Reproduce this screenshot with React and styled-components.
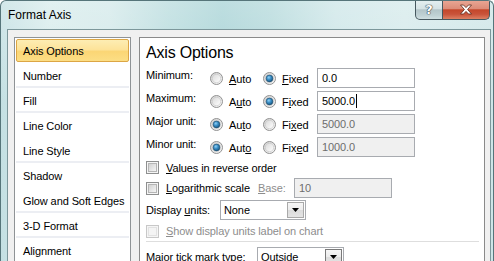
import React from 'react';
import styled, { createGlobalStyle, css } from 'styled-components';

const Global = createGlobalStyle`
  html, body { margin: 0; padding: 0; background: #fff; overflow: hidden; }
  body { font-family: "Liberation Sans", Arial, sans-serif; color: #000; }
  #root { width: 494px; height: 261px; overflow: hidden; }
`;

const Window = styled.div`
  width: 494px;
  height: 261px;
  box-sizing: border-box;
  display: flex;
  flex-direction: column;
  border: 1px solid #56757a;
  border-bottom: none;
  border-radius: 6px 6px 0 0;
  overflow: hidden;
  background:
    linear-gradient(180deg, rgba(255,255,255,0.25) 0%, rgba(255,255,255,0) 40%),
    linear-gradient(90deg, #c4e0e3 0%, #d8ecec 10%, #d3e9ea 22%, #b9dcde 34%, #a8d3d6 45%, #b4d9db 55%, #cde6e8 68%, #d5eaeb 82%, #cde5e7 100%);
`;

const TitleBar = styled.div`
  height: 28px;
  display: flex;
  align-items: stretch;
  flex-shrink: 0;
`;

const Title = styled.div`
  display: flex;
  align-items: center;
  padding-left: 7px;
  font-size: 12px;
  color: #000;
`;

const CaptionGroup = styled.div`
  margin-left: auto;
  margin-right: 3px;
  margin-top: -1px;
  display: flex;
  align-self: flex-start;
`;

const CaptionButton = styled.div`
  height: 20px;
  box-sizing: border-box;
  border: 1px solid #46585f;
  border-top: none;
  display: flex;
  align-items: center;
  justify-content: center;
  ${(p) =>
    p.$close
      ? css`
          width: 47px;
          border-left: none;
          border-radius: 0 0 5px 0;
          background: linear-gradient(180deg, #eaa896 0%, #dc8d79 45%, #c4472b 52%, #c9533a 75%, #dd8063 100%);
        `
      : css`
          width: 28px;
          border-radius: 0 0 0 5px;
          background: linear-gradient(180deg, #e5f0f1 0%, #d5e3e5 45%, #b3c5c9 52%, #bfd1d4 80%, #cfdfe1 100%);
        `}
`;

const HelpGlyph = styled.span`
  font-family: "DejaVu Sans", sans-serif;
  font-weight: bold;
  font-size: 13px;
  color: #fff;
  text-shadow: 0 0 1px #2c3a40, 0 0 1px #2c3a40, 0 0 1px #2c3a40;
  line-height: 1;
  margin-top: -1px;
`;

const Client = styled.div`
  flex: 1;
  margin: 0 2px 0 6px;
  border: 1px solid #7c979b;
  border-bottom: none;
  background: #f0f0f0;
  display: flex;
  align-items: flex-start;
  gap: 8px;
  padding: 7px 0 0 6px;
  overflow: hidden;
`;

const Sidebar = styled.div`
  width: 117px;
  height: 240px;
  box-sizing: border-box;
  flex-shrink: 0;
  background: #fff;
  border: 1px solid #8f9396;
  padding: 0 1px;
  display: flex;
  flex-direction: column;
`;

const NavItem = styled.div`
  height: 25px;
  box-sizing: border-box;
  display: flex;
  align-items: center;
  padding-left: 7px;
  font-size: 11px;
  letter-spacing: -0.1px;
  flex-shrink: 0;
  ${(p) => p.$sep && css`border-bottom: 2px solid #eceef3; padding-top: 2px;`}
  ${(p) =>
    p.$selected &&
    css`
      height: 23px;
      margin: 1px 0;
      padding-left: 6px;
      border: 1px solid #dca645;
      border-radius: 2px;
      background: linear-gradient(180deg, #fdedb3 0%, #fde39a 45%, #fbd675 55%, #fcde85 100%);
    `}
`;

const Panel = styled.div`
  width: 346px;
  height: 240px;
  box-sizing: border-box;
  flex-shrink: 0;
  background: #fff;
  border: 1px solid #8a8a8a;
  padding: 4px 0 0 6px;
  display: flex;
  flex-direction: column;
`;

const Heading = styled.div`
  height: 22px;
  line-height: 22px;
  font-size: 16px;
  letter-spacing: -0.2px;
  margin-bottom: 2px;
`;

const Row = styled.div`
  height: ${(p) => p.$h || 23}px;
  display: flex;
  align-items: center;
  font-size: 11px;
  letter-spacing: -0.1px;
  flex-shrink: 0;
`;

const RowLabel = styled.div`
  width: ${(p) => p.$w || 64}px;
  flex-shrink: 0;
  align-self: ${(p) => (p.$top ? 'flex-start' : 'center')};
  padding-top: ${(p) => (p.$top ? '1px' : '0')};
  line-height: 16px;
  color: ${(p) => (p.$disabled ? '#8d8d8d' : '#000')};
`;

const Option = styled.label`
  width: ${(p) => p.$w}px;
  flex-shrink: 0;
  display: flex;
  align-items: center;
  gap: ${(p) => p.$gap || 6}px;
  color: ${(p) => (p.$disabled ? '#8d8d8d' : '#000')};
  margin-top: ${(p) => p.$mt || 0}px;
`;

const Key = styled.span`
  text-decoration: underline;
  text-underline-offset: 1px;
`;

const TextBox = styled.div`
  width: 98px;
  height: 20px;
  box-sizing: border-box;
  border: 1px solid #a8abb0;
  padding-left: 4px;
  display: flex;
  align-items: center;
  font-size: 11px;
  background: ${(p) => (p.$disabled ? '#f0f0f0' : '#fff')};
  color: ${(p) => (p.$disabled ? '#6d6d6d' : '#000')};
  flex-shrink: 0;
`;

const Caret = styled.span`
  display: inline-block;
  width: 1px;
  height: 14px;
  background: #000;
  margin-left: 1px;
`;

const Select = styled.div`
  width: ${(p) => p.$w}px;
  height: 20px;
  box-sizing: border-box;
  border: 1px solid #a8abb0;
  background: #fff;
  display: flex;
  align-items: stretch;
  flex-shrink: 0;
`;

const SelectText = styled.div`
  flex: 1;
  display: flex;
  align-items: center;
  padding-left: 3px;
  font-size: 11px;
`;

const DropButton = styled.div`
  width: 17px;
  margin: 1px 1px 1px 0;
  box-sizing: border-box;
  border: 1px solid ${(p) => (p.$dark ? '#7a7a7a' : '#a9a9a9')};
  background: linear-gradient(180deg, #f6f6f6 0%, #ececec 50%, #dcdcdc 51%, #e4e4e4 100%);
  display: flex;
  align-items: center;
  justify-content: center;
`;

const Separator = styled.div`
  height: 1px;
  background: #dedede;
  margin-right: 5px;
  flex-shrink: 0;
`;

const Radio = ({ checked }) => (
  <svg width="13" height="13" viewBox="0 0 13 13" style={{ flexShrink: 0 }}>
    <defs>
      <linearGradient id="rOuter" x1="0" y1="0" x2="1" y2="1">
        <stop offset="0" stopColor="#d0d0d0" />
        <stop offset="1" stopColor="#fafafa" />
      </linearGradient>
      <linearGradient id="rInner" x1="0" y1="0" x2="1" y2="1">
        <stop offset="0" stopColor="#d9d9d9" />
        <stop offset="1" stopColor="#ffffff" />
      </linearGradient>
      <radialGradient id="rDot" cx="0.4" cy="0.35" r="0.7">
        <stop offset="0" stopColor="#8fd0f5" />
        <stop offset="0.45" stopColor="#3a8ec6" />
        <stop offset="1" stopColor="#134f78" />
      </radialGradient>
    </defs>
    <circle cx="6.5" cy="6.5" r="6" fill="url(#rOuter)" stroke="#929292" strokeWidth="1" />
    <circle cx="6.5" cy="6.5" r="4.2" fill="url(#rInner)" stroke="#c4c4c4" strokeWidth="0.6" />
    {checked && <circle cx="6.5" cy="6.5" r="3.4" fill="url(#rDot)" stroke="#1c4a6a" strokeWidth="0.6" />}
  </svg>
);

const Check = ({ disabled }) => (
  <svg width="13" height="13" viewBox="0 0 13 13" style={{ flexShrink: 0 }}>
    <defs>
      <linearGradient id="cInner" x1="0" y1="0" x2="1" y2="1">
        <stop offset="0" stopColor="#cfcfcf" />
        <stop offset="1" stopColor="#f7f7f7" />
      </linearGradient>
    </defs>
    <rect x="0.5" y="0.5" width="12" height="12" fill="#f5f5f5" stroke={disabled ? '#c8c8c8' : '#8e8f8f'} />
    {disabled ? (
      <rect x="2.5" y="2.5" width="8" height="8" fill="#f4f4f4" stroke="#e2e2e2" />
    ) : (
      <rect x="2.5" y="2.5" width="8" height="8" fill="url(#cInner)" stroke="#b5b5b5" />
    )}
  </svg>
);

const Triangle = () => (
  <svg width="7" height="4" viewBox="0 0 7 4">
    <path d="M0 0 H7 L3.5 4 Z" fill="#000" />
  </svg>
);

const CloseX = () => (
  <svg width="14" height="11" viewBox="0 0 14 11">
    <path
      d="M1.5 1 H4.5 L7 3.6 L9.5 1 H12.5 L8.6 5.5 L12.5 10 H9.5 L7 7.4 L4.5 10 H1.5 L5.4 5.5 Z"
      fill="#fff"
      stroke="#5a2618"
      strokeWidth="0.8"
      strokeLinejoin="round"
    />
  </svg>
);

const withKey = (text, idx) => [
  text.slice(0, idx),
  <Key key="k">{text[idx]}</Key>,
  text.slice(idx + 1),
];

const navItems = [
  { label: 'Axis Options', selected: true },
  { label: 'Number', sep: true },
  { label: 'Fill', sep: true },
  { label: 'Line Color' },
  { label: 'Line Style', sep: true },
  { label: 'Shadow' },
  { label: 'Glow and Soft Edges', sep: true },
  { label: '3-D Format', sep: true },
  { label: 'Alignment' },
];

const axisRows = [
  { label: 'Minimum:', auto: false, k: 0, value: '0.0' },
  { label: 'Maximum:', auto: false, k: 1, value: '5000.0', caret: true },
  { label: 'Major unit:', auto: true, k: 2, value: '5000.0', disabled: true },
  { label: 'Minor unit:', auto: true, k: 3, value: '1000.0', disabled: true },
];

export default function App() {
  return (
    <>
      <Global />
      <Window>
        <TitleBar>
          <Title>Format Axis</Title>
          <CaptionGroup>
            <CaptionButton>
              <HelpGlyph>?</HelpGlyph>
            </CaptionButton>
            <CaptionButton $close>
              <CloseX />
            </CaptionButton>
          </CaptionGroup>
        </TitleBar>
        <Client>
          <Sidebar>
            {navItems.map((it) => (
              <NavItem key={it.label} $selected={it.selected} $sep={it.sep}>
                {it.label}
              </NavItem>
            ))}
          </Sidebar>
          <Panel>
            <Heading>Axis Options</Heading>
            {axisRows.map((r) => (
              <Row key={r.label}>
                <RowLabel $top>{r.label}</RowLabel>
                <Option $w={53} $mt={2}>
                  <Radio checked={r.auto} />
                  <span>{withKey('Auto', r.k)}</span>
                </Option>
                <Option $w={54} $mt={2}>
                  <Radio checked={!r.auto} />
                  <span>{withKey('Fixed', r.k)}</span>
                </Option>
                <TextBox $disabled={r.disabled}>
                  {r.value}
                  {r.caret && <Caret />}
                </TextBox>
              </Row>
            ))}
            <Row $h={19}>
              <Option $w={200} $gap={7}>
                <Check />
                <span>{withKey('Values in reverse order', 0)}</span>
              </Option>
            </Row>
            <Row $h={22}>
              <Option $w={112} $gap={7}>
                <Check />
                <span>{withKey('Logarithmic scale', 0)}</span>
              </Option>
              <RowLabel $w={36} $disabled>
                {withKey('Base:', 0)}
              </RowLabel>
              <TextBox $disabled>10</TextBox>
            </Row>
            <Row $h={22}>
              <RowLabel $w={74}>
                Display <Key>u</Key>nits:
              </RowLabel>
              <Select $w={86}>
                <SelectText>None</SelectText>
                <DropButton>
                  <Triangle />
                </DropButton>
              </Select>
            </Row>
            <Row $h={20}>
              <Option $w={300} $gap={7} $disabled>
                <Check disabled />
                <span>{withKey('Show display units label on chart', 0)}</span>
              </Option>
            </Row>
            <Separator />
            <Row $h={20} style={{ marginTop: 5 }}>
              <RowLabel $w={111}>Major tick mark type:</RowLabel>
              <Select $w={87}>
                <SelectText>Outside</SelectText>
                <DropButton $dark>
                  <Triangle />
                </DropButton>
              </Select>
            </Row>
          </Panel>
        </Client>
      </Window>
    </>
  );
}
